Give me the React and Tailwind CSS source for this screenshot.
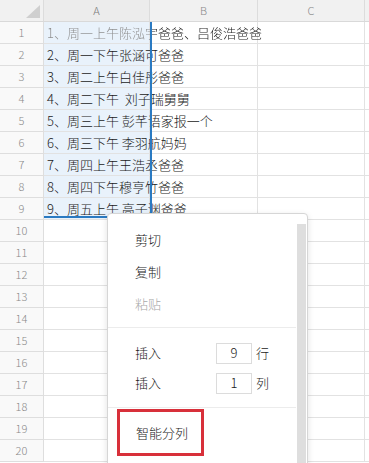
import React from "react";

const rows = [
  "1、周一上午陈泓宇爸爸、吕俊浩爸爸",
  "2、周一下午张涵可爸爸",
  "3、周二上午白佳彤爸爸",
  "4、周二下午  刘子瑞舅舅",
  "5、周三上午 彭芊语家报一个",
  "6、周三下午 李羽航妈妈",
  "7、周四上午王浩丞爸爸",
  "8、周四下午穆亨竹爸爸",
  "9、周五上午 高子渊爸爸",
];

const font = { fontFamily: '"Noto Sans CJK SC", "Noto Sans", sans-serif' };

export default function App() {
  const all = Array.from({ length: 20 }, (_, i) => i + 1);
  return (
    <div
      className="relative w-[369px] h-[463px] overflow-hidden bg-white text-[13px] font-light text-[#1a1a1a]"
      style={font}
    >
      {/* header */}
      <div className="flex h-[22px] bg-[#f1f1f1] border-b border-[#d9d9d9]">
        <div className="relative w-[44px] shrink-0 border-r border-[#dcdcdc]">
          <div className="absolute right-[3px] bottom-[3px] w-0 h-0 border-l-[14px] border-l-transparent border-b-[13px] border-b-[#cfcfcf]" />
        </div>
        <div className="w-[106px] shrink-0 border-r border-[#dcdcdc] flex items-center justify-center text-[11px] text-[#777] bg-[#ececec]">A</div>
        <div className="w-[108px] shrink-0 border-r border-[#dcdcdc] flex items-center justify-center text-[11px] text-[#888]">B</div>
        <div className="w-[107px] shrink-0 border-r border-[#dcdcdc] flex items-center justify-center text-[11px] text-[#888]">C</div>
        <div className="flex-1" />
      </div>
      {all.map((n) => {
        const text = rows[n - 1];
        return (
          <div key={n} className="flex h-[22px]">
            <div className="w-[44px] shrink-0 border-r border-b border-[#dedede] bg-[#f9f9f9] flex items-center justify-center text-[11px] text-[#8a8a8a]">
              {n}
            </div>
            <div
              className={
                "relative w-[106px] shrink-0 border-r border-b border-[#e2e2e2] " +
                (text ? "bg-[#e9f2fb]" : "")
              }
            >
              {text && (
                <span
                  className={
                    "absolute left-[3px] top-0 h-[21px] leading-[21px] whitespace-pre z-10 " +
                    (n === 1
                      ? "bg-[linear-gradient(to_right,#8c8c8c_103px,#1a1a1a_103px)] bg-clip-text text-transparent"
                      : "")
                  }
                >
                  {text}
                </span>
              )}
            </div>
            <div className="w-[108px] shrink-0 border-r border-b border-[#e2e2e2]" />
            <div className="w-[107px] shrink-0 border-r border-b border-[#e2e2e2]" />
            <div className="flex-1 border-b border-[#e2e2e2]" />
          </div>
        );
      })}

      {/* selection border */}
      <div className="pointer-events-none absolute left-[44px] top-[22px] w-[108px] h-[196px] border-r-2 border-b-2 border-[#2a7ac2] z-20" />

      {/* context menu */}
      <div className="absolute left-[107px] top-[213px] w-[201px] h-[260px] bg-white border border-[#d6d6d6] rounded-t-[4px] shadow-[0_2px_6px_rgba(0,0,0,0.12)] z-30">
        <div className="absolute right-[1px] top-[10px] w-[9px] h-[260px] bg-[#dedede]" />
        <div className="pt-[10px] pr-[11px]">
          <div className="h-[32px] flex items-center pl-[27px]">剪切</div>
          <div className="h-[32px] flex items-center pl-[27px]">复制</div>
          <div className="h-[32px] flex items-center pl-[27px] text-[#a8a8a8]">粘贴</div>
          <div className="mt-[7px] h-px bg-[#ececec]" />
          <div className="mt-[10px] h-[30px] flex items-center pl-[27px]">
            <span className="w-[81px]">插入</span>
            <span className="w-[36px] h-[21px] border border-[#dcdcdc] flex items-center justify-center">9</span>
            <span className="ml-[4px]">行</span>
          </div>
          <div className="h-[30px] flex items-center pl-[27px]">
            <span className="w-[81px]">插入</span>
            <span className="w-[36px] h-[21px] border border-[#dcdcdc] flex items-center justify-center">1</span>
            <span className="ml-[4px]">列</span>
          </div>
          <div className="mt-[9px] h-px bg-[#ececec]" />
          <div className="mt-[1px] ml-[9px] w-[87px] h-[47px] border-[3px] border-[#d8303a] flex items-center pl-[16px]">
            智能分列
          </div>
        </div>
      </div>
    </div>
  );
}
